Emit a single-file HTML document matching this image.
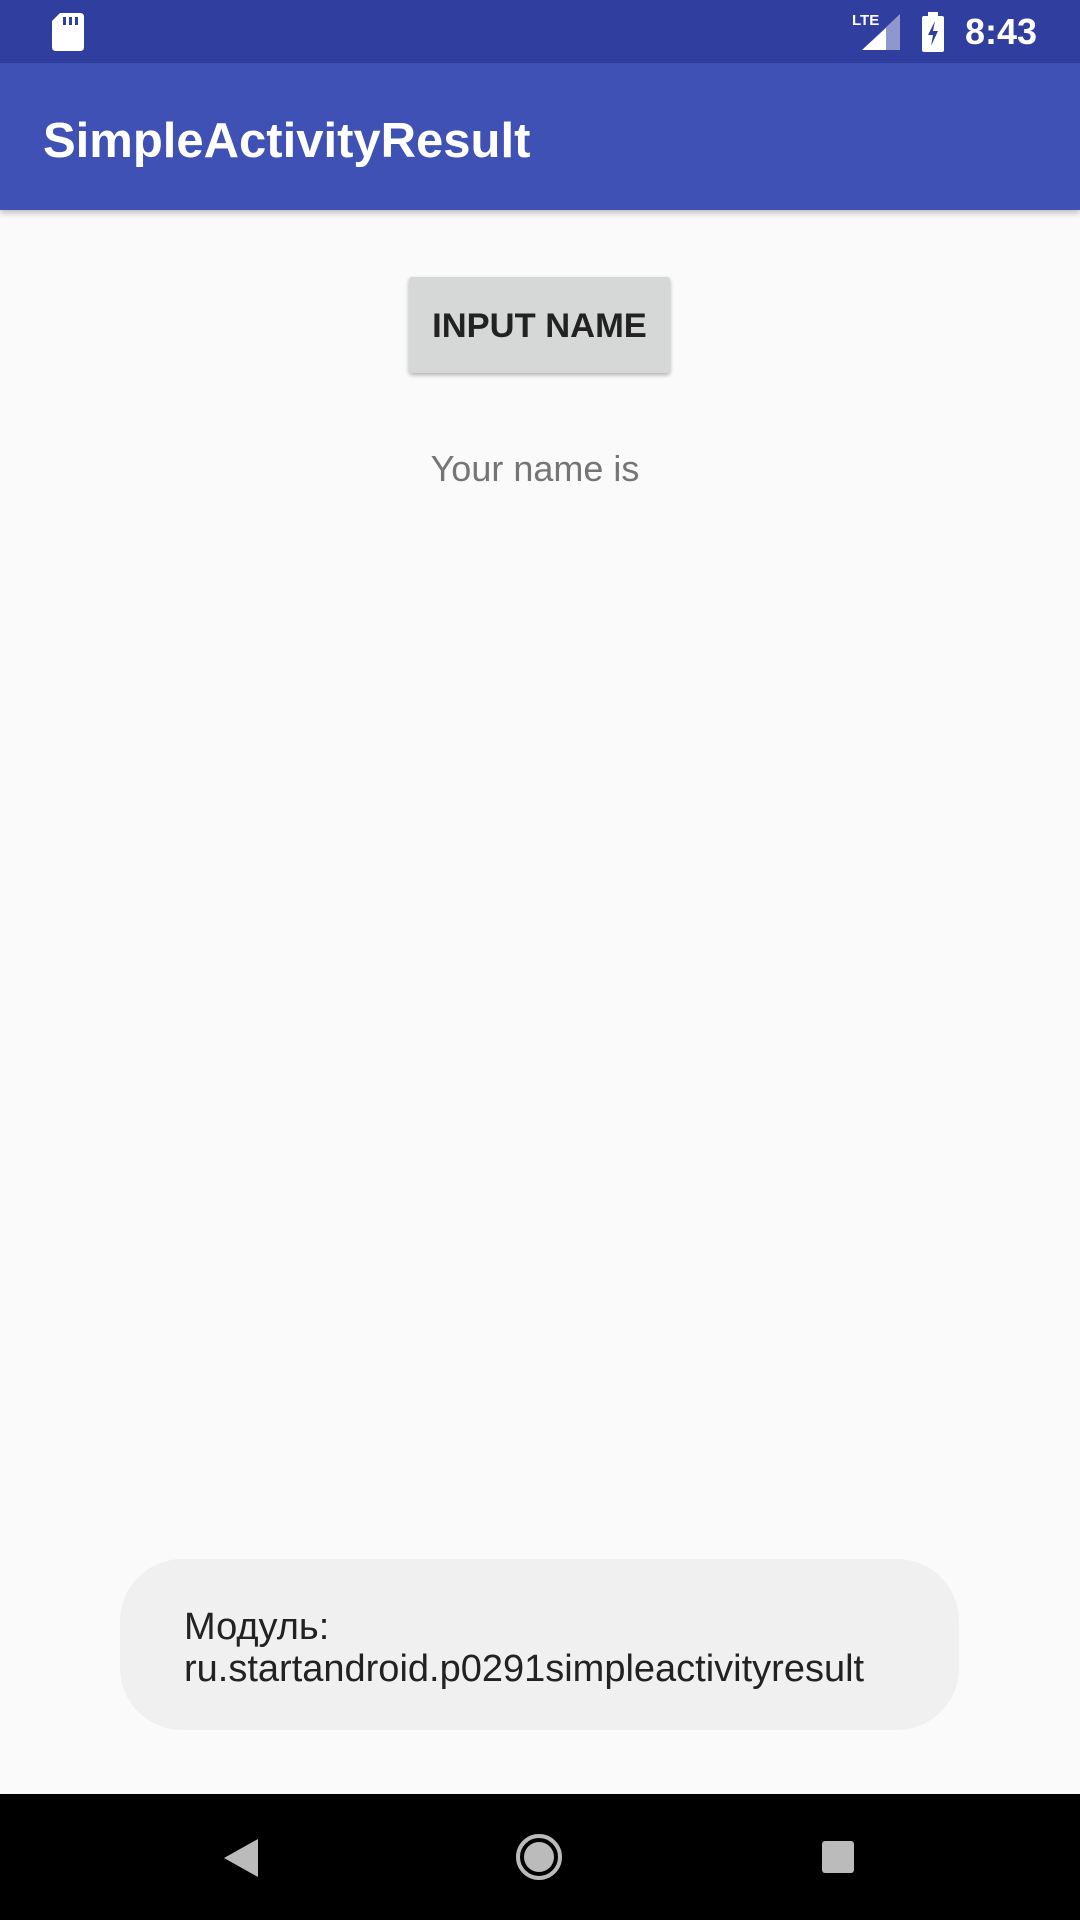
<!DOCTYPE html>
<html><head><meta charset="utf-8"><style>
*{margin:0;padding:0;box-sizing:border-box}
body{width:1080px;height:1920px;background:#FAFAFA;font-family:"Liberation Sans",sans-serif;position:relative;overflow:hidden}
.sb{position:absolute;left:0;top:0;width:1080px;height:63px;background:#303F9F}
.ab{position:absolute;left:0;top:63px;width:1080px;height:147px;background:#3F51B5;box-shadow:0 3px 6px rgba(0,0,0,.25)}
.title{position:absolute;left:43px;top:111px;color:#fff;font-size:49px;font-weight:bold;line-height:60px}
.btn{position:absolute;left:409px;top:277px;width:261px;height:96px;background:#D6D7D7;border-radius:3px;box-shadow:0 2px 4px rgba(0,0,0,.3);color:#222;font-size:34.5px;font-weight:bold;text-align:center;line-height:98px}
.name{position:absolute;left:0;width:1070px;top:444px;text-align:center;color:#757575;font-size:36px;line-height:50px}
.toast{position:absolute;left:120px;top:1559px;width:839px;height:171px;background:#F0F0F0;border-radius:62px;padding:47px 0 0 64px;font-size:38px;line-height:42px;color:#222}
.nav{position:absolute;left:0;top:1794px;width:1080px;height:126px;background:#000}
.time{position:absolute;right:43px;top:12px;color:#fff;font-size:36px;font-weight:bold;line-height:40px}
</style></head><body>
<div class="sb">
<svg style="position:absolute;left:52px;top:13px" width="32" height="38" viewBox="0 0 32 38"><path d="M8 0H28Q32 0 32 4V34Q32 38 28 38H4Q0 38 0 34V8Z" fill="#fff"/><rect x="11" y="4" width="3" height="8" fill="#303F9F"/><rect x="17" y="4" width="3" height="8" fill="#303F9F"/><rect x="23" y="4" width="3" height="8" fill="#303F9F"/></svg>
<div style="position:absolute;left:852px;top:12px;color:#fff;font-size:15px;font-weight:bold">LTE</div>
<svg style="position:absolute;left:862px;top:14px" width="38" height="36"><polygon points="38,0 38,36 0,36" fill="#8E98CF"/><polygon points="24,14 24,36 0,36" fill="#fff"/></svg>
<svg style="position:absolute;left:922px;top:12px" width="22" height="40" viewBox="0 0 22 40"><rect x="6" y="0" width="10" height="4" fill="#fff"/><rect x="0" y="4" width="22" height="36" rx="2" fill="#fff"/><path d="M13 9L6 23H11L9 34L16 19H11Z" fill="#303F9F"/></svg>
<div class="time">8:43</div>
</div>
<div class="ab"></div>
<div class="title">SimpleActivityResult</div>
<div class="btn">INPUT NAME</div>
<div class="name">Your name is</div>
<div class="toast">Модуль:<br>ru.startandroid.p0291simpleactivityresult</div>
<div class="nav">
<svg style="position:absolute;left:224px;top:45px" width="34" height="38"><polygon points="34,0 34,38 0,19" fill="#bbb"/></svg>
<svg style="position:absolute;left:515px;top:39px" width="48" height="48"><circle cx="24" cy="24" r="21" fill="none" stroke="#bbb" stroke-width="4"/><circle cx="24" cy="24" r="15" fill="#bbb"/></svg>
<div style="position:absolute;left:822px;top:47px;width:32px;height:32px;background:#bbb;border-radius:3px"></div>
</div>
</body></html>
